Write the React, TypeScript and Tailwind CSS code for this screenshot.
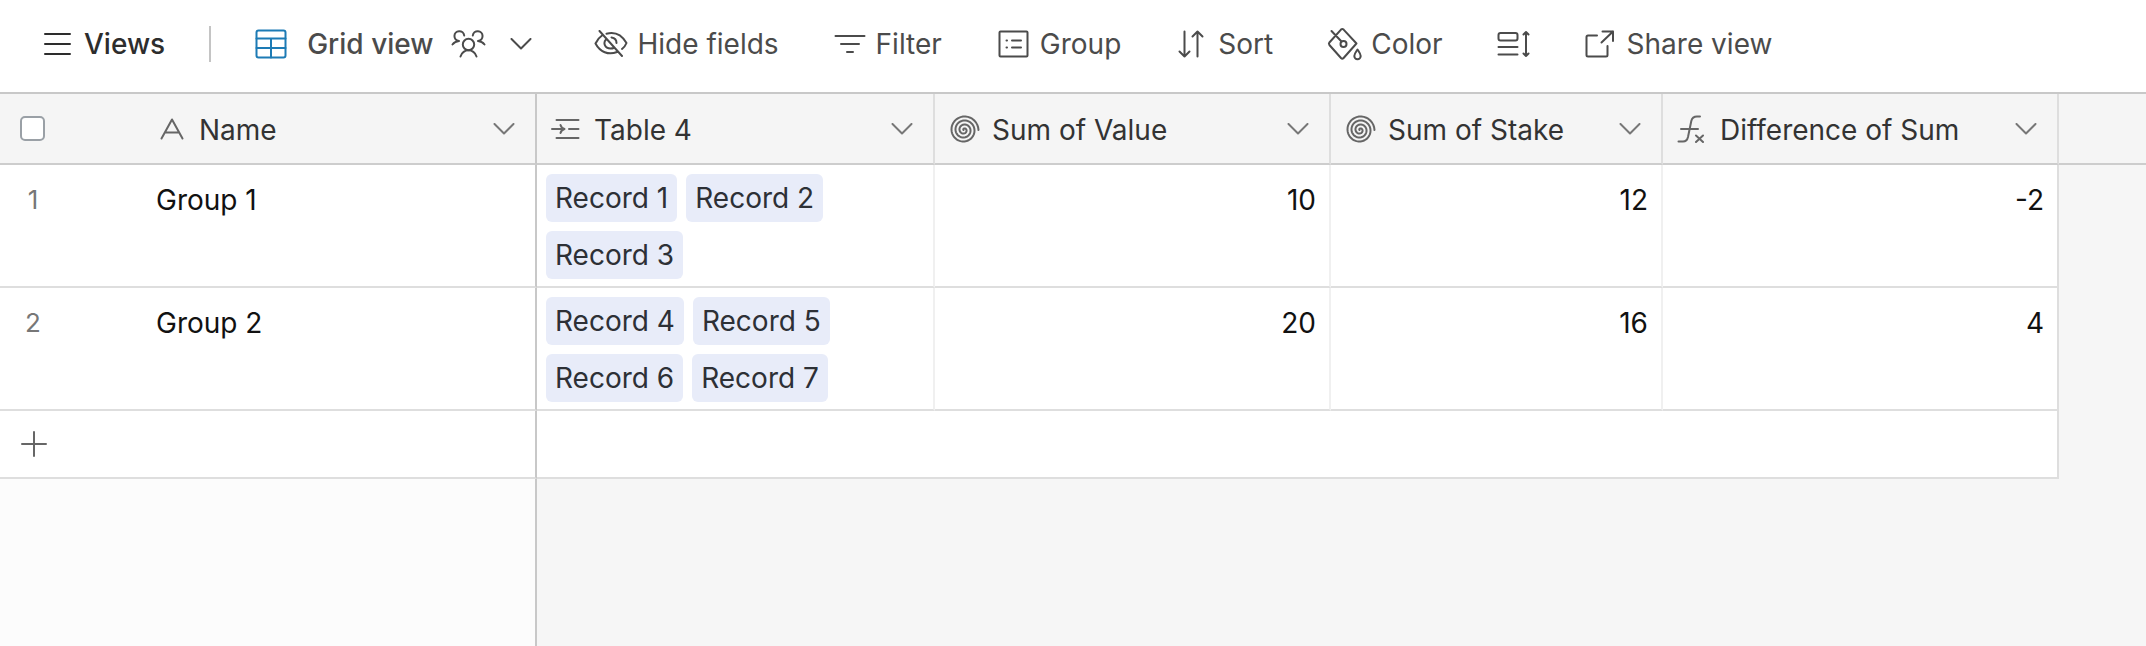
import type { ReactNode } from "react";

type IconProps = { children: ReactNode; w: number; h: number; className?: string };

function Icon({ children, w, h, className = "" }: IconProps) {
  return (
    <svg
      width={w}
      height={h}
      viewBox={`0 0 ${w} ${h}`}
      fill="none"
      stroke="currentColor"
      strokeWidth={2}
      strokeLinecap="round"
      strokeLinejoin="round"
      className={`shrink-0 ${className}`}
      aria-hidden="true"
    >
      {children}
    </svg>
  );
}

function Chevron() {
  return (
    <Icon w={22} h={12}>
      <path d="M1.5 1l9.5 9.5L20.5 1" />
    </Icon>
  );
}

// 3.5 clockwise turns, open end on the right
const spiral = Array.from({ length: 121 }, (_, i) => {
  const t = i / 120;
  const a = Math.PI + t * Math.PI * 7;
  const r = 0.5 + t * 14;
  return `${i ? "L" : "M"}${(15 + r * Math.cos(a)).toFixed(2)} ${(16 + r * Math.sin(a)).toFixed(2)}`;
}).join("");

const icons = {
  text: (
    <Icon w={24} h={22}>
      <path d="M1.5 20.5L12 1.5l10.5 19M5 14.5h14" />
    </Icon>
  ),
  link: (
    <Icon w={30} h={22}>
      <path d="M5.500 2h22M18 11h9.500M5.500 20h22M1 11h12M9.500 7c.5 2 1.500 3.200 4 4-2.500.8-3.500 2-4 4" />
    </Icon>
  ),
  rollup: (
    <Icon w={31} h={30}>
      <path d={spiral} />
    </Icon>
  ),
  formula: (
    <Icon w={28} h={28}>
      <path d="M23 1.5h-3c-3 0-5 1.5-5.700 4.500L11 22c-.7 3-2 4.500-5 4.500H1.500M4 14h17M19 20.500l7 6.500M26 20.500l-7 6.500" />
    </Icon>
  ),
};

const columns = [
  { name: "Name", icon: icons.text },
  { name: "Table 4", icon: icons.link },
  { name: "Sum of Value", icon: icons.rollup },
  { name: "Sum of Stake", icon: icons.rollup },
  { name: "Difference of Sum", icon: icons.formula },
];

const rows = [
  { name: "Group 1", records: ["Record 1", "Record 2", "Record 3"], values: [10, 12, -2] },
  { name: "Group 2", records: ["Record 4", "Record 5", "Record 6", "Record 7"], values: [20, 16, 4] },
];

export default function App() {
  return (
    <main className="flex min-h-screen flex-col bg-[#f6f6f6] font-['Inter',sans-serif] text-[28px] leading-9 text-[#4b4b4b]">
      <header className="flex h-[94px] items-center border-b-2 border-[#c8c8c8] bg-white pb-1 pl-[43px] whitespace-nowrap">
        <button className="flex items-center gap-3 font-medium text-[#2d2d2d]">
          <Icon w={29} h={22}>
            <path d="M2 1h25M2 11h25M2 21h25" />
          </Icon>
          Views
        </button>
        <span className="ml-11 h-9 w-[2px] bg-[#c4c4c4]" />
        <button className="ml-11 flex items-center font-medium">
          <Icon w={32} h={30} className="text-[#1d7bb5]">
            <rect x="1.5" y="1.5" width="29" height="27" rx="2" />
            <path d="M1.5 9.5h29M1.5 19h29M16 9.5v19" />
          </Icon>
          <span className="ml-5">Grid view</span>
          <Icon w={35} h={28} className="ml-[18px]">
            <circle cx="17.500" cy="14.500" r="5.700" />
            <path d="M9.500 26.500c1.500-4 4.500-6.200 8-6.200s6.500 2.200 8 6.200M8 11A4.900 4.900 0 1 1 13.200 5.500M1.500 14.500C3 12.500 5 11.300 8 11M27 11A4.900 4.900 0 1 0 21.800 5.500M33.500 14.500C32 12.500 30 11.300 27 11" />
          </Icon>
          <span className="ml-6">
            <Chevron />
          </span>
        </button>
        <button className="ml-[62px] flex items-center gap-[9px]">
          <Icon w={34} h={28}>
            <path d="M5.500 1l22.500 25M12.500 3.800C21 1.500 28 5.500 32.500 13c-1 2.500-2.500 4.500-4.500 6M23 22C14.500 25.500 6 22 1.500 13.500 3 10 5 7.500 8 5.500M12 9.500c-3 3-1.500 9 4.500 9 1 0 2 0 3-.5M17.500 7.500c3 .5 5 2.500 5 5.500" />
          </Icon>
          Hide fields
        </button>
        <button className="ml-[55px] flex items-center gap-[10px]">
          <Icon w={32} h={20}>
            <path d="M1.5 2h29M7 10h18M13 18h6" />
          </Icon>
          Filter
        </button>
        <button className="ml-14 flex items-center gap-[10px]">
          <Icon w={32} h={28}>
            <rect x="1.5" y="1.5" width="28" height="25" rx="1" />
            <path d="M14 10.500h9M14 17.500h9M8.500 10.500h.5M8.500 17.500h.5" />
          </Icon>
          Group
        </button>
        <button className="ml-[57px] flex items-center gap-[14px]">
          <Icon w={26} h={28}>
            <path d="M6.500 1.500v25M1.500 21.500l5 5 5-5M19.500 26.500v-25M14.500 6.500l5-5 5 5" />
          </Icon>
          Sort
        </button>
        <button className="ml-[54px] flex items-center gap-2">
          <Icon w={36} h={34}>
            <path d="M14 2.600L2.400 15.500q-1 1.200 0 2.500L14 31q1.300 1.300 2.600 0L29 17M16.600 2.600L29.500 16.500M14 2.600q1.300-1.200 2.600 0M4.500 4l10 10.500" />
            <circle cx="16.500" cy="17" r="3" />
            <path d="M30.500 22.500c2 3 3.200 4.500 3.200 6.500a3.200 3.200 0 0 1-6.400 0c0-2 1.200-3.500 3.200-6.500z" />
          </Icon>
          Color
        </button>
        <button className="ml-[54px]" aria-label="Row height">
          <Icon w={34} h={28}>
            <rect x="1.5" y="3" width="19" height="7.500" rx="2" />
            <path d="M1.5 17h19M1.5 24.500h19M29 2v24M26.500 4.500L29 2l2.500 2.500M26.500 23.500L29 26l2.500-2.500" />
          </Icon>
        </button>
        <button className="ml-[54px] flex items-center gap-3">
          <Icon w={30} h={28}>
            <path d="M12 5.500H3q-1.500 0-1.500 1.500v18q0 1.500 1.500 1.500h18q1.500 0 1.500-1.500V16M17.500 1.500H28V11M28 1.500L16.500 12.500" />
          </Icon>
          Share view
        </button>
      </header>

      <div className="grow bg-[linear-gradient(90deg,#fcfcfc_535px,#c8c8c8_535px,#c8c8c8_537px,transparent_537px)]">
        <table className="w-full table-fixed border-separate border-spacing-0">
          <colgroup>
            <col className="w-[145px]" />
            <col className="w-[392px]" />
            <col className="w-[398px]" />
            <col className="w-[396px]" />
            <col className="w-[332px]" />
            <col className="w-[396px]" />
            <col />
          </colgroup>
          <thead>
            <tr className="h-[71px] bg-[#f5f5f5] text-[#333]">
              <th className="border-b-2 border-[#cdcdcd] pl-5 text-left">
                <input
                  type="checkbox"
                  aria-label="Select all records"
                  className="block size-[25px] appearance-none rounded-[5px] border-2 border-[#9aa0a6] bg-white"
                />
              </th>
              {columns.map((column, i) => (
                <th
                  key={column.name}
                  className={`border-r-2 border-b-2 border-b-[#cdcdcd] py-0 pr-5 font-normal ${
                    i === 0 ? "border-r-[#c8c8c8] pl-[15px]" : "border-r-[#dedede] pl-[14px]"
                  }`}
                >
                  <div className="flex items-center">
                    <span className={`flex text-[#666] ${i === 0 ? "w-[39px]" : "w-[43px]"}`}>
                      {column.icon}
                    </span>
                    <span className="pt-[2px]">{column.name}</span>
                    <button className="ml-auto text-[#777]" aria-label={`${column.name} options`}>
                      <Chevron />
                    </button>
                  </div>
                </th>
              ))}
              <th className="border-b-2 border-[#cdcdcd]" />
            </tr>
          </thead>
          <tbody>
            {rows.map((row, i) => (
              <tr key={row.name} className="h-[123px] align-top text-[#111]">
                <td className="border-b-2 border-[#dedede] bg-white pt-[17px] text-[26px] text-[#777]">
                  <span className="block w-[66px] text-center">{i + 1}</span>
                </td>
                <td className="border-r-2 border-b-2 border-r-[#c8c8c8] border-b-[#dedede] bg-white pt-[17px] pl-[11px]">
                  {row.name}
                </td>
                <td className="border-r-2 border-b-2 border-r-[#f0f0f0] border-b-[#dedede] bg-white pt-[9px] pl-[9px]">
                  <div className="flex max-w-[320px] flex-wrap gap-[9px] text-[#2d3036]">
                    {row.records.map((record) => (
                      <span key={record} className="rounded-md bg-[#e8ecf9] px-[9px] py-[6px]">
                        {record}
                      </span>
                    ))}
                  </div>
                </td>
                {row.values.map((value, j) => (
                  <td
                    key={j}
                    className={`border-r-2 border-b-2 border-b-[#dedede] bg-white pt-[17px] pr-[13px] text-right ${
                      j === 2 ? "border-r-[#dedede]" : "border-r-[#f0f0f0]"
                    }`}
                  >
                    {value}
                  </td>
                ))}
                <td />
              </tr>
            ))}
            <tr className="h-[68px]">
              <td className="border-b-2 border-[#dedede] bg-white pl-5 align-middle">
                <button className="block text-[#666]" aria-label="Add record">
                  <Icon w={28} h={28}>
                    <path d="M14 2v24M2 14h24" />
                  </Icon>
                </button>
              </td>
              <td className="border-r-2 border-b-2 border-r-[#c8c8c8] border-b-[#dedede] bg-white" />
              <td colSpan={4} className="border-r-2 border-b-2 border-[#dedede] bg-white" />
              <td />
            </tr>
          </tbody>
        </table>
      </div>
    </main>
  );
}
